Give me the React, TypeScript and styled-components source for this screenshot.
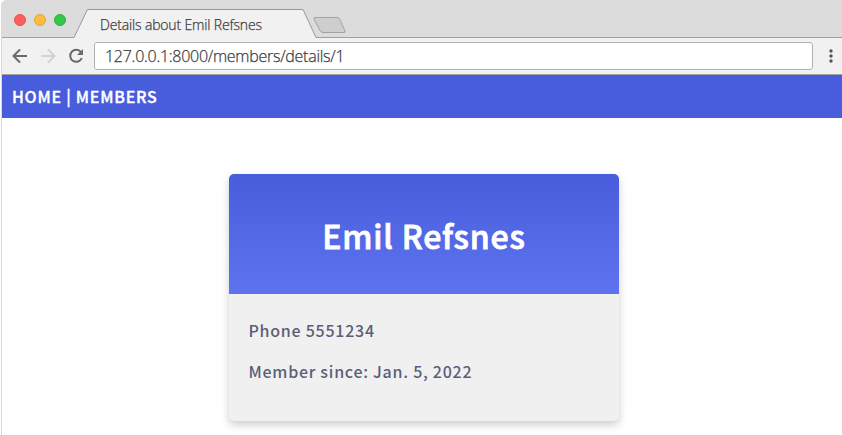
import React from "react";
import styled, { createGlobalStyle } from "styled-components";

const GlobalStyle = createGlobalStyle`
  * { box-sizing: border-box; }
  body { margin: 0; background: #fff; overflow: hidden; }
`;

const sourceFont = `"Source Sans Pro", "Noto Sans CJK SC", sans-serif`;
const chromeFont = `"Segoe UI", "Open Sans", sans-serif`;

const Window = styled.div`
  height: 435px;
  margin-left: 1px;
  border-left: 1px solid #d9d9d9;
  border-top-left-radius: 5px;
  overflow: hidden;
  background: #fff;
`;

const TabBar = styled.header`
  display: flex;
  height: 38px;
  background: #dcdcdc;
  box-shadow: inset 0 -1px #a0a0a0;
`;

const Lights = styled.div`
  display: flex;
  gap: 8px;
  width: 72px;
  padding: 14px 0 0 12px;
`;

const Light = styled.span<{ $fill: string; $edge: string }>`
  width: 12px;
  height: 12px;
  border-radius: 50%;
  background: ${(p) => p.$fill};
  border: 1px solid ${(p) => p.$edge};
`;

const Tab = styled.div`
  position: relative;
  width: 243px;
  height: 38px;
  padding: 15px 0 0 26px;
  white-space: nowrap;
  font: 300 14px/20px ${chromeFont};
  color: #3c3c3c;
`;

const TabShape = styled.svg`
  position: absolute;
  inset: 0;
`;

const TabTitle = styled.span`
  position: relative;
  letter-spacing: -0.16px;
  -webkit-text-stroke: 0.25px currentColor;
`;

const NewTab = styled.svg`
  margin: 16px 0 0 -5px;
`;

const Toolbar = styled.div`
  display: flex;
  align-items: center;
  height: 37px;
  background: #f1f1f1;
  border-bottom: 1px solid #a3a3a3;
`;

const NavIcons = styled.svg`
  flex: none;
`;

const Address = styled.div`
  flex: 1;
  height: 28px;
  margin-top: -1px;
  padding-left: 10px;
  border: 1px solid #b2b2b2;
  border-radius: 3px;
  background: #fff;
  font: 300 16px/27px ${chromeFont};
  letter-spacing: -0.27px;
  -webkit-text-stroke: 0.25px currentColor;
  color: #3c3c3c;
`;

const MenuIcon = styled.svg`
  flex: none;
`;

const SiteNav = styled.nav`
  display: flex;
  height: 43px;
  padding-left: 10px;
  background: #485ddb;
  color: #fff;
  font: 500 16px/43px ${sourceFont};
  letter-spacing: 0.76px;
  -webkit-text-stroke: 0.35px currentColor;
  white-space: pre;
`;

const Card = styled.article`
  width: 390px;
  height: 247px;
  margin: 56px 0 0 227px;
  border-radius: 5px;
  overflow: hidden;
  background: #f0f0f0;
  box-shadow: 0 4px 8px rgba(0, 0, 0, 0.2);
`;

const CardHeader = styled.h1`
  margin: 0;
  height: 120px;
  background: linear-gradient(#485ddb, #5d73ef);
  color: #fff;
  text-align: center;
  font: 500 32px/122px ${sourceFont};
  letter-spacing: 0.8px;
  -webkit-text-stroke: 0.8px currentColor;
`;

const Details = styled.div`
  display: flex;
  flex-direction: column;
  gap: 17px;
  padding: 24px 19.5px;
  color: #5a5f78;
  font: 500 16px/24px ${sourceFont};
  letter-spacing: 0.74px;
`;

const Detail = styled.p`
  margin: 0;
`;

export default function App() {
  return (
    <>
      <GlobalStyle />
      <Window>
        <TabBar>
          <Lights>
            <Light $fill="#ff5f5c" $edge="#e8504e" />
            <Light $fill="#ffbd3f" $edge="#e2a33a" />
            <Light $fill="#33c84a" $edge="#2bae3f" />
          </Lights>
          <Tab>
            <TabShape width="243" height="38" viewBox="0 0 243 38">
              <path d="M0 38V37.5L13.5 9.5H229L242 37.5V38Z" fill="#f1f1f1" />
              <path d="M0 37.5L13.5 9.5H229L242 37.5" fill="none" stroke="#999" />
            </TabShape>
            <TabTitle>Details about Emil Refsnes</TabTitle>
          </Tab>
          <NewTab width="36" height="18" viewBox="0 0 36 18">
            <path d="M3 1.5H25Q27 1.5 28 3.5L33 15Q33.500 16.500 32 16.500H11Q9 16.500 8 14.500L2 3Q1.500 1.500 3 1.500Z" fill="#cecece" stroke="#a2a2a2" />
          </NewTab>
        </TabBar>
        <Toolbar>
          <NavIcons width="92" height="36" viewBox="0 0 92 36" fill="none" strokeWidth="2">
            <path d="M25 18H12M18 11.500L11.500 18L18 24.500" stroke="#6b6b6b" />
            <path d="M39 18H52M46 11.500L52.500 18L46 24.500" stroke="#d2d2d2" />
            <path d="M79 14.200A6 6 0 1 0 79.800 20" stroke="#6b6b6b" />
            <path d="M81 11V17H75Z" fill="#6b6b6b" />
          </NavIcons>
          <Address>127.0.0.1:8000/members/details/1</Address>
          <MenuIcon width="29" height="36" viewBox="0 0 29 36" fill="#555">
            <circle cx="18" cy="13" r="1.700" />
            <circle cx="18" cy="18" r="1.700" />
            <circle cx="18" cy="23" r="1.700" />
          </MenuIcon>
        </Toolbar>
        <SiteNav>HOME | MEMBERS</SiteNav>
        <Card>
          <CardHeader>Emil Refsnes</CardHeader>
          <Details>
            <Detail>Phone 5551234</Detail>
            <Detail>Member since: Jan. 5, 2022</Detail>
          </Details>
        </Card>
      </Window>
    </>
  );
}
